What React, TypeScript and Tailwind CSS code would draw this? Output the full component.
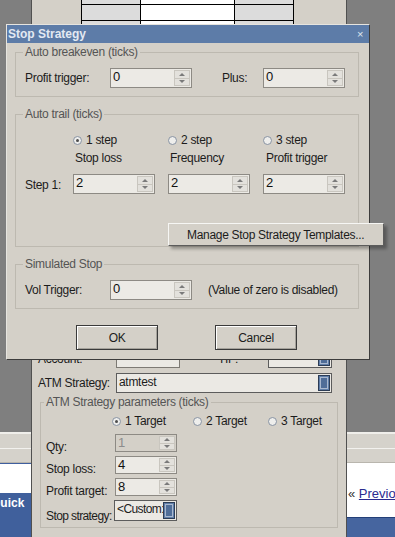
import React from "react";

function Spinner() {
  return (
    <div className="flex flex-col w-[16px] my-[1px] mr-[1px] border border-[#c9c6bf] bg-[#e3e1dc]">
      <div className="flex-1 flex items-center justify-center border-b border-[#c9c6bf]">
        <div className="w-0 h-0 border-x-[3px] border-x-transparent border-b-[3px] border-b-[#7a7a7a]" />
      </div>
      <div className="flex-1 flex items-center justify-center">
        <div className="w-0 h-0 border-x-[3px] border-x-transparent border-t-[3px] border-t-[#7a7a7a]" />
      </div>
    </div>
  );
}

function NumBox({ value, className = "", disabled = false }: { value: string; className?: string; disabled?: boolean }) {
  return (
    <div
      className={`flex border border-[#8d8a84] ${
        disabled ? "bg-[#d4d0c8] text-[#8c8c8c]" : "bg-[#eceae5] text-[#111]"
      } ${className}`}
    >
      <div className="flex-1 pl-[2px] text-[13px] leading-[16px] tracking-normal">{value}</div>
      <Spinner />
    </div>
  );
}

function ComboButton() {
  return (
    <div className="w-[12px] shrink-0 flex border border-[#2c3c55] bg-[#5f7ea9] p-[1px]">
      <div className="flex-1 border border-[#a9b8cf] bg-[#4f6d98]" />
    </div>
  );
}

function Combo({ text, className = "" }: { text: string; className?: string }) {
  return (
    <div className={`flex border border-[#5c5c5c] bg-[#ebe9e4] p-[1px] ${className}`}>
      <div className="flex-1 min-w-0 overflow-hidden whitespace-nowrap pl-[1px] leading-[15px]">{text}</div>
      <ComboButton />
    </div>
  );
}

function Radio({ checked = false, label }: { checked?: boolean; label: string }) {
  return (
    <div className="flex items-center gap-[4px] whitespace-nowrap">
      <div className="w-[9px] h-[9px] rounded-full border border-[#8893a2] bg-[#eeeeec] flex items-center justify-center">
        {checked && <div className="w-[3px] h-[3px] rounded-full bg-[#4d4d4d]" />}
      </div>
      <span>{label}</span>
    </div>
  );
}

function Btn({ children }: { children: React.ReactNode }) {
  return (
    <div className="w-[82px] h-[25px] border border-[#3a3a3a] shadow-[inset_1px_1px_0_#ffffff,inset_-1px_-1px_0_#a5a29b] flex items-center justify-center">
      {children}
    </div>
  );
}

function LeftPage() {
  return (
    <div className="flex flex-col overflow-hidden">
      <div className="h-[432px]" />
      <div className="h-[31px] bg-[#d5d2cb] border-t-[2px] border-t-[#efeeea] border-b border-b-[#b9b6ae] flex flex-col justify-center">
        <div className="h-[1px] bg-[#f2f1ee]" />
      </div>
      <div className="h-[30px] bg-white border-t border-t-[#3f5f9f]" />
      <div className="flex-1 bg-[#40609c] pt-[3px]">
        <div className="-ml-[9px] whitespace-nowrap font-bold text-white tracking-normal">Quick</div>
      </div>
    </div>
  );
}

function RightPage() {
  return (
    <div className="flex flex-col overflow-hidden">
      <div className="h-[432px]" />
      <div className="h-[31px] bg-[#d5d2cb] border-t-[2px] border-t-[#efeeea] border-b border-b-[#b9b6ae] flex flex-col justify-center">
        <div className="h-[1px] bg-[#f2f1ee]" />
      </div>
      <div className="h-[54px] bg-white pt-[24px] pl-[1px] whitespace-nowrap text-[13px] tracking-normal">
        <span className="text-[#333]">« </span>
        <span className="text-[#2b2b8f] underline">Previous</span>
      </div>
      <div className="flex-1 bg-[#46659f] border-t border-t-[#233f78]" />
    </div>
  );
}

function BackWindow() {
  return (
    <div className="flex flex-col bg-[#d4d0c8] border-x border-[#505050] overflow-hidden">
      <div className="-mt-[11px] ml-[49px] grid grid-cols-[59px_94px_59px] w-fit border-l border-black">
        {Array.from({ length: 9 }).map((_, i) => (
          <div
            key={i}
            className={`h-[16px] border-r border-b border-black ${i % 3 === 1 ? "bg-white" : "bg-[#dcdcdc]"}`}
          />
        ))}
      </div>

      <div className="mt-[312px] flex items-center h-[19px] pl-[6px]">
        <span className="w-[78px]">Account:</span>
        <div className="w-[64px] h-full border border-[#7d7a74] bg-[#ebe9e4]" />
        <span className="ml-[38px] w-[50px]">TIF:</span>
        <Combo text="" className="w-[64px] h-full" />
      </div>

      <div className="mt-[5px] flex items-center h-[20px] pl-[6px]">
        <span className="w-[78px]">ATM Strategy:</span>
        <Combo text="atmtest" className="w-[216px] h-full" />
      </div>

      <fieldset className="mt-[2px] mx-[8px] border border-[#bdb9b0] pl-[5px] pt-[5px] pb-[6px]">
        <legend className="-ml-[2px] px-[2px] text-[#555]">ATM Strategy parameters (ticks)</legend>
        <div className="grid grid-cols-[66px_81px_75px_auto] h-[14px] items-center">
          <div />
          <Radio checked label="1 Target" />
          <Radio label="2 Target" />
          <Radio label="3 Target" />
        </div>
        <div className="mt-[6px] flex items-end h-[18px]">
          <span className="w-[69px] -mb-[2px]">Qty:</span>
          <NumBox value="1" disabled className="w-[62px] h-full" />
        </div>
        <div className="mt-[4px] flex items-end h-[18px]">
          <span className="w-[69px] -mb-[2px]">Stop loss:</span>
          <NumBox value="4" className="w-[62px] h-full" />
        </div>
        <div className="mt-[4px] flex items-end h-[18px]">
          <span className="w-[69px] -mb-[2px]">Profit target:</span>
          <NumBox value="8" className="w-[62px] h-full" />
        </div>
        <div className="mt-[4px] flex items-end h-[21px]">
          <span className="w-[68px] -mb-[2px] whitespace-nowrap tracking-[-0.6px]">Stop strategy:</span>
          <Combo text="<Custom:" className="w-[63px] h-full tracking-[-0.6px]" />
        </div>
      </fieldset>
    </div>
  );
}

function Dialog() {
  return (
    <div className="absolute left-[6px] top-[24px] w-[364px] h-[336px] flex flex-col bg-[#d4d0c8] border border-t-[#e6e4df] border-l-[#e6e4df] border-r-[#3c3c3c] border-b-[#3c3c3c]">
      <div className="h-[18px] shrink-0 bg-[#5d7ca8] flex items-center justify-between pl-[1px] pr-[6px]">
        <span className="font-bold text-[#e3e9f2] tracking-normal">Stop Strategy</span>
        <span className="text-[11px] text-[#dfe6ef]">×</span>
      </div>

      <div className="flex flex-col pl-[8px] pr-[10px]">
        {/* Auto breakeven */}
        <fieldset className="mt-[2px] border border-[#bdb9b0] pl-[9px] pt-[9px] pb-[8px]">
          <legend className="-ml-[2px] px-[2px] text-[#555]">Auto breakeven (ticks)</legend>
          <div className="flex items-center">
            <span className="w-[85px]">Profit trigger:</span>
            <NumBox value="0" className="w-[82px] h-[20px]" />
            <span className="ml-[30px] w-[41px]">Plus:</span>
            <NumBox value="0" className="w-[82px] h-[20px]" />
          </div>
        </fieldset>

        {/* Auto trail */}
        <fieldset className="mt-[10px] border border-[#bdb9b0] pl-[9px] pt-[12px] pb-[52px]">
          <legend className="-ml-[2px] px-[2px] text-[#555]">Auto trail (ticks)</legend>
          <div className="grid grid-cols-[48px_95px_95px_95px] h-[14px] items-center">
            <div />
            <Radio checked label="1 step" />
            <Radio label="2 step" />
            <Radio label="3 step" />
          </div>
          <div className="mt-[4px] grid grid-cols-[48px_95px_95px_95px] h-[14px] items-center">
            <div />
            <span className="pl-[2px]">Stop loss</span>
            <span className="pl-[2px]">Frequency</span>
            <span className="pl-[3px]">Profit trigger</span>
          </div>
          <div className="mt-[9px] grid grid-cols-[48px_95px_95px_95px] items-center">
            <span className="pt-[2px]">Step 1:</span>
            <NumBox value="2" className="w-[82px] h-[20px]" />
            <NumBox value="2" className="w-[82px] h-[20px]" />
            <NumBox value="2" className="w-[82px] h-[20px]" />
          </div>
        </fieldset>

        {/* Simulated stop */}
        <fieldset className="mt-[10px] border border-[#bdb9b0] pl-[9px] pt-[9px] pb-[8px]">
          <legend className="-ml-[2px] px-[2px] text-[#555]">Simulated Stop</legend>
          <div className="flex items-center">
            <span className="w-[85px]">Vol Trigger:</span>
            <NumBox value="0" className="w-[82px] h-[20px]" />
            <span className="ml-[16px]">(Value of zero is disabled)</span>
          </div>
        </fieldset>

        <div className="mt-[16px] ml-[61px] flex gap-[57px]">
          <Btn>OK</Btn>
          <Btn>Cancel</Btn>
        </div>
      </div>
    </div>
  );
}

function TemplatesMenu() {
  return (
    <div className="absolute left-[168px] top-[223px] w-[216px] h-[23px] bg-[#d4d0c8] border border-t-[#f6f6f4] border-l-[#f6f6f4] border-r-[#5c5c5c] border-b-[#5c5c5c] shadow-[3px_3px_3px_rgba(0,0,0,0.3)] flex items-center pl-[18px] whitespace-nowrap">
      Manage Stop Strategy Templates...
    </div>
  );
}

export default function App() {
  return (
    <div className="relative w-[395px] h-[537px] overflow-hidden bg-[#7f7f7f] grid grid-cols-[31px_316px_48px] font-['Liberation_Sans',Arial,sans-serif] text-[12px] leading-[14px] tracking-[-0.3px] text-[#1c1c1c]">
      <LeftPage />
      <BackWindow />
      <RightPage />
      <Dialog />
      <TemplatesMenu />
    </div>
  );
}
